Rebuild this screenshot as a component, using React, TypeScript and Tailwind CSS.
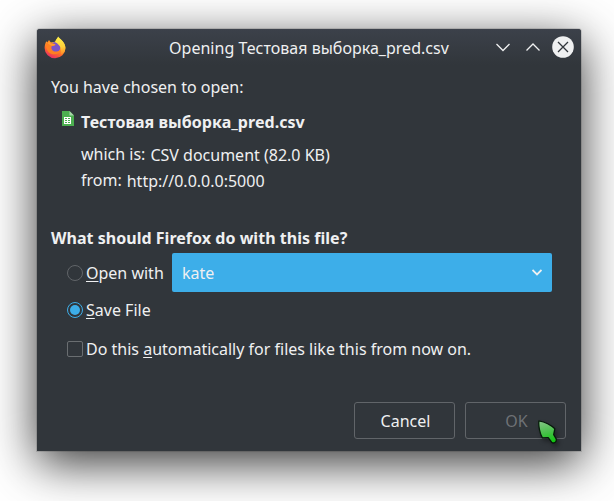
import type { ReactNode } from "react";

function FirefoxIcon() {
  return (
    <svg width="22" height="23" viewBox="0 0 22 23">
      <defs>
        <linearGradient id="fox" x1="0.75" y1="0.1" x2="0.3" y2="1">
          <stop offset="0" stopColor="#ffe040" />
          <stop offset="0.35" stopColor="#ffa92a" />
          <stop offset="0.65" stopColor="#ff6a2a" />
          <stop offset="1" stopColor="#e8286a" />
        </linearGradient>
        <linearGradient id="flame" x1="0.5" y1="0" x2="0.6" y2="1">
          <stop offset="0" stopColor="#fff04a" />
          <stop offset="0.6" stopColor="#ffd03a" />
          <stop offset="1" stopColor="#ff8a25" />
        </linearGradient>
      </defs>
      <path d="M2.2 5.2 3.7 7 5 4.3 6.8 6.6 11 5.8 14 1.5C16.5 3 21.3 6.5 21.5 12A10.4 10.4 0 0 1 11 22.3 10.4 10.4 0 0 1 .6 12C.6 9.3 1.5 7 2.2 5.2Z" fill="url(#fox)" />
      <circle cx="11.2" cy="11.3" r="5.2" fill="#7b54c9" />
      <path d="M14.2.4C15.8 3.3 20.8 5.2 21.3 11.4 21.4 14.8 19.6 17.4 17 18.4 18 13.8 16.6 9 11.2 6.3 11.4 3.8 13.1 2.6 14.2.4Z" fill="url(#flame)" />
      <path d="M2 7.8 5 4.3 6.8 6.8 11.5 8.2 10.4 9.4 7.6 10.2C6.8 12.8 8.4 15.3 11.4 15.6 13.6 15.8 15 14.4 16.8 14.4 15.6 18.6 8 19.8 4.5 15.9 2.5 13.7 1.6 11 2 7.8Z" fill="#ff8022" />
      <path d="M3.8 7.5 5 5.2 6.7 7.6 11.5 8.3 10.3 9.6 7.3 9.8Z" fill="#ff9c30" />
    </svg>
  );
}

function SheetIcon() {
  return (
    <svg width="12" height="15" viewBox="0 0 12 15" className="shrink-0">
      <path d="M0 0H7.5L12 4.5V15H0Z" fill="#4caf50" />
      <path d="M7.5 0 12 4.5H7.5Z" fill="#a5d6a7" />
      <path d="M2 6H9V13H2Z" fill="#fff" />
      <path d="M3 7.5H5M6 7.5H8M3 9.5H5M6 9.5H8M3 11.5H5M6 11.5H8" stroke="#4caf50" />
    </svg>
  );
}

function Pointer() {
  return (
    <svg width="24" height="30" viewBox="0 0 24 30" className="absolute left-[500px] top-[390px] drop-shadow-[2px_3px_2px_rgba(0,0,0,0.35)]">
      <defs>
        <linearGradient id="pointer" x1="0.3" y1="0" x2="0.5" y2="1">
          <stop offset="0" stopColor="#83c684" />
          <stop offset="0.5" stopColor="#4cc14e" />
          <stop offset="1" stopColor="#12c512" />
        </linearGradient>
      </defs>
      <path d="M1.9 1.8C7.5 2.8 14.5 6.5 17.8 9.8L16.7 15.6 19.2 19.9C20 23.2 16.6 25 14.6 23.2L11.2 18.6 5.4 18.8C3 15 1.2 7 1.9 1.8Z" fill="url(#pointer)" stroke="#071a0b" strokeWidth="1.3" strokeLinejoin="round" />
    </svg>
  );
}

function Key({ children }: { children: ReactNode }) {
  return <span className="underline decoration-1 underline-offset-2 [text-decoration-skip-ink:none]">{children}</span>;
}

export default function App() {
  return (
    <div className="h-[501px] w-[614px] overflow-hidden bg-white pl-[37px] pt-[29px] font-['Noto_Sans',sans-serif] text-[16px] leading-[22px] text-[#eff0f1]">
      <div className="relative flex h-[422px] w-[544px] flex-col rounded-t-[3px] bg-[#31363b] shadow-[0_0_0_1px_rgba(0,0,0,0.12),0_12px_48px_rgba(0,0,0,0.8)]">
        <header className="flex h-9 shrink-0 items-center rounded-t-[3px] bg-linear-to-b from-[#3c414a] to-[#31363b] pl-[7px] pr-[7px]">
          <FirefoxIcon />
          <h1 className="ml-[103px] mt-[2px] w-[281px] whitespace-nowrap tracking-[0.02px]">Opening Тестовая выборка_pred.csv</h1>
          <svg width="44" height="14" viewBox="0 0 44 14" className="ml-[46px] shrink-0" fill="none" stroke="#eff0f1" strokeWidth="1.3">
            <path d="M.5 4 7 10.5 13.5 4M30.5 10.5 37 4 43.5 10.5" />
          </svg>
          <svg width="22" height="22" viewBox="0 0 22 22" className="ml-auto shrink-0">
            <circle cx="11" cy="11" r="10.8" fill="#eff0f1" />
            <path d="M6 6 16 16M16 6 6 16" stroke="#31363b" strokeWidth="1.3" />
          </svg>
        </header>

        <main className="flex flex-col pl-[14px] pt-[11px]">
          <p>You have chosen to open:</p>
          <div className="ml-[11px] mt-[13px] flex gap-[7px]">
            <SheetIcon />
            <div className="flex flex-col">
              <strong className="font-bold tracking-[0.05px]">Тестовая выборка_pred.csv</strong>
              <p className="mt-[10px] flex gap-[5px]"><span>which is:</span><span className="pt-px">CSV document (82.0 KB)</span></p>
              <p className="mt-[3px] flex gap-[5px]"><span>from:</span><span className="pt-px">http://0.0.0.0:5000</span></p>
            </div>
          </div>

          <h2 className="mt-[35px] font-bold tracking-[0.03px]">What should Firefox do with this file?</h2>
          <div className="ml-4 mt-1 flex h-[39px] items-center">
            <span className="size-4 rounded-full border border-[#616569]" />
            <span className="ml-[3px] w-[86px]"><Key>O</Key>pen with</span>
            <div className="flex h-[39px] w-[380px] items-center justify-between rounded-[2px] bg-[#3daee9] pl-[10px] pr-[10px]">
              <span>kate</span>
              <svg width="10" height="7" viewBox="0 0 10 7" fill="none" stroke="#eff0f1" strokeWidth="1.8"><path d="M.5 1 5 5.5 9.5 1" /></svg>
            </div>
          </div>
          <div className="ml-4 mt-[7px] flex items-center gap-[3px]">
            <span className="flex size-4 items-center justify-center rounded-full border border-[#3daee9]"><span className="size-[10px] rounded-full bg-[#3daee9]" /></span>
            <span><Key>S</Key>ave File</span>
          </div>
          <div className="ml-4 mt-[17px] flex items-center gap-[3px]">
            <span className="size-4 rounded-[2px] border border-[#6a6e71]" />
            <span>Do this <Key>a</Key>utomatically for files like this from now on.</span>
          </div>
        </main>

        <footer className="mb-3 mr-[15px] mt-auto flex justify-end gap-[10px]">
          <button className="h-[37px] w-[101px] rounded-[3px] border border-[#616569] pl-[2px]">Cancel</button>
          <button className="h-[37px] w-[101px] rounded-[3px] border border-[#616569] pl-[2px] text-[#6e7175]">OK</button>
        </footer>
        <Pointer />
      </div>
    </div>
  );
}
